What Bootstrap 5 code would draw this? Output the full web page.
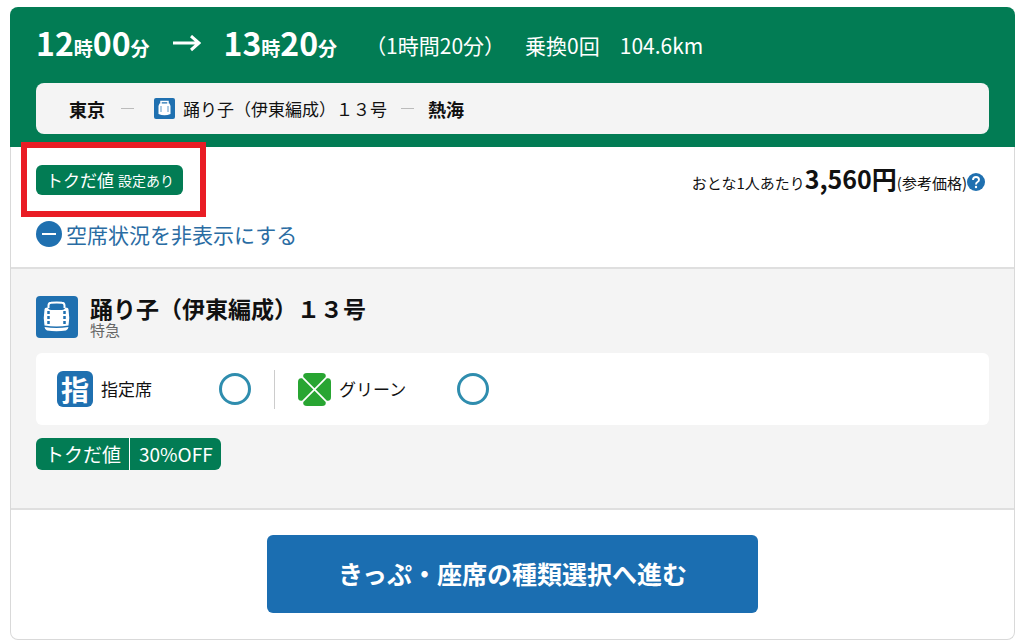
<!DOCTYPE html>
<html lang="ja">
<head>
<meta charset="utf-8">
<meta name="viewport" content="width=device-width, initial-scale=1">
<title>空席状況</title>
<link href="https://cdn.jsdelivr.net/npm/bootstrap@5.3.0/dist/css/bootstrap.min.css" rel="stylesheet">
<style>
  body { font-family: "Noto Sans CJK JP", sans-serif; color: #111; line-height: 24px; background: #fff; }
  svg { display: block; flex: none; }
  .page { padding: 7px 9px 4px 10px; }
  .trip-head { background: #027c54; color: #fff; border-radius: 8px 8px 0 0; padding: 14px 26px 13px; }
  .trip-body { border: 1px solid #d9d9d9; border-top: 0; border-radius: 0 0 8px 8px; }
  .times { height: 46px; margin-bottom: 16px; line-height: 48px; font-size: 21px; }
  .clock { font-size: 32px; font-weight: 700; line-height: 42px; }
  .clock small { font-size: 19px; }
  .arrow { margin: 0 23px; }
  .route { background: #f4f4f4; color: #111; border-radius: 8px; height: 51px; padding: 0 33px; font-size: 17px; }
  .route strong { font-size: 18px; }
  .dash { width: 13px; height: 1px; background: #bbb; margin: 0 16px; }
  .dash-end { margin: 0 14px; }
  .band { padding: 18px 25px 15px; }
  .band-grey { background: #f4f4f4; border-top: 2px solid #dfdfdf; border-bottom: 2px solid #dfdfdf; padding: 27px 25px 38px; }
  .deal { background: #027c54; color: #fff; border-radius: 6px; height: 30px; padding: 0 9px 0 10px; font-size: 17px; }
  .deal small { font-size: 14px; }
  .marker { position: absolute; inset: -23px -23px -22px -15px; border: 6px solid #e91d25; pointer-events: none; }
  .price { font-size: 15px; }
  .price strong { font-size: 25px; }
  .toggle-link { color: #2a6ca3; font-size: 21px; margin-top: 26px; }
  .train-name { font-size: 23px; line-height: 24px; font-weight: 700; margin: 0; }
  .train-kind { font-size: 15px; line-height: 20px; color: #666; }
  .seats { background: #fff; border-radius: 6px; height: 72px; padding: 0 21px; margin-top: 13px; font-size: 17px; }
  .seat-mark { width: 36px; height: 36px; border-radius: 6px; background: #1f70b0; color: #fff; font-size: 28px; font-weight: 700; line-height: 36px; text-align: center; }
  .seat-name { width: 118px; padding-left: 8px; }
  .avail { width: 32px; height: 32px; border: 3px solid #2f8dae; border-radius: 50%; }
  .seat-rule { width: 1px; height: 39px; background: #ccc; margin: 0 23px; }
  .discount { height: 32px; color: #fff; font-size: 19px; margin-top: 13px; border-radius: 6px; overflow: hidden; gap: 1px; background: #fff; }
  .discount span { background: #027c54; line-height: 32px; padding: 0 8px 0 9px; }
  .go-band { padding: 25px 25px 26px; }
  .go { background: #1b6eb1; color: #fff; border: 0; border-radius: 6px; height: 78px; width: 51.5%; font-size: 25px; font-weight: 700; }
  .go:hover { background: #155c96; color: #fff; }
</style>
</head>
<body>
<main class="page">
  <article>
    <header class="trip-head">
      <div class="times d-flex">
        <span class="clock">12<small>時</small>00<small>分</small></span>
        <svg class="arrow align-self-center" width="28" height="18" viewBox="0 0 28 18" fill="none" stroke="#fff" stroke-width="3" aria-label="から"><path d="M0 8H26M18 1L26 8L18 15"/></svg>
        <span class="clock">13<small>時</small>20<small>分</small></span>
        <span class="ms-4 ps-1">（1時間20分）</span>
        <span class="ms-3 ps-1">乗換0回</span>
        <span class="ms-3 ps-1">104.6km</span>
      </div>
      <div class="route d-flex align-items-center">
        <strong>東京</strong><span class="dash"></span>
        <svg class="ms-1 me-2" width="21" height="21" viewBox="0 0 21 21" aria-hidden="true"><rect width="21" height="21" rx="2" fill="#1f70b0"/><path d="M7 6V3.500h7V6" fill="none" stroke="#fff" stroke-width="1.500"/><path d="M5.500 5.500h10L16.500 8V16Q10.500 18.500 4.500 16V8Z" fill="#fff"/><path d="M7 8v6M14 8v6" stroke="#5b98c8"/></svg>
        <span>踊り子（伊東編成）１３号</span><span class="dash dash-end"></span><strong>熱海</strong>
      </div>
    </header>
    <div class="trip-body">
      <section class="band">
        <div class="d-flex justify-content-between align-items-center">
          <div class="deal position-relative d-flex align-items-center gap-1">トクだ値<small>設定あり</small><span class="marker"></span></div>
          <div class="price d-flex align-items-center me-1">
            <div>おとな1人あたり<strong>3,560円</strong>(参考価格)</div>
            <svg class="mt-1" width="18" height="18" viewBox="0 0 18 18" aria-label="ヘルプ"><circle cx="9" cy="9" r="9" fill="#1f70b0"/><path d="M6 7Q6 4 9 4T12 6.800Q12 8.200 10.500 9T9 11.500" fill="none" stroke="#fff" stroke-width="1.900"/><circle cx="9" cy="14" r="1.200" fill="#fff"/></svg>
          </div>
        </div>
        <a href="#seats" class="toggle-link d-inline-flex align-items-center text-decoration-none gap-1">
          <svg width="26" height="26" viewBox="0 0 26 26" aria-hidden="true"><circle cx="13" cy="13" r="13" fill="#1f70b0"/><path d="M6 13H20" stroke="#fff" stroke-width="2"/></svg>空席状況を非表示にする</a>
      </section>
      <section class="band-grey" id="seats">
        <div class="d-flex">
          <svg width="42" height="42" viewBox="0 0 42 42" aria-hidden="true">
            <rect width="42" height="42" rx="4" fill="#1f70b0"/>
            <path d="M12.500 12V9.500Q12.500 7 15 6.800Q21 6 26 6.800Q28.500 7 28.500 9.500V12" fill="none" stroke="#fff" stroke-width="2"/>
            <path d="M8.500 13.500Q8.500 11.500 11.500 11.500Q13 14 15 14H26Q28 14 29.500 11.500Q32.500 11.500 32.500 13.500Q34 22 32.500 29.500Q20.500 31.500 8.500 29.500Q7 22 8.500 13.500Z" fill="#fff"/>
            <path d="M8.500 31Q20.500 33 32.500 31Q32 34 30 34.500Q20.500 36 11 34.500Q9 34 8.500 31Z" fill="#fff"/>
            <path d="M12.500 15v13M28.500 15v13" stroke="#1f70b0" stroke-width="2.500" stroke-dasharray="3 2"/>
          </svg>
          <div class="ps-2 ms-1">
            <h2 class="train-name">踊り子（伊東編成）１３号</h2>
            <div class="train-kind">特急</div>
          </div>
        </div>
        <div class="seats d-flex align-items-center">
          <span class="seat-mark">指</span>
          <span class="seat-name">指定席</span>
          <span class="avail ms-2" role="img" aria-label="空席あり"></span>
          <span class="seat-rule"></span>
          <svg width="33" height="33" viewBox="0 0 33 33" fill="#28a532" aria-hidden="true"><path id="leaf" d="M16.500 15.300L5.300 4.100Q4.600 0 9 0H24Q28.400 0 27.700 4.100Z"/><use href="#leaf" transform="rotate(90 16.500 16.500)"/><use href="#leaf" transform="rotate(180 16.500 16.500)"/><use href="#leaf" transform="rotate(270 16.500 16.500)"/></svg>
          <span class="seat-name">グリーン</span>
          <span class="avail ms-2" role="img" aria-label="空席あり"></span>
        </div>
        <div class="discount d-inline-flex"><span>トクだ値</span><span>30%OFF</span></div>
      </section>
      <footer class="go-band text-center">
        <button type="button" class="btn go">きっぷ・座席の種類選択へ進む</button>
      </footer>
    </div>
  </article>
</main>
<script src="https://cdn.jsdelivr.net/npm/bootstrap@5.3.0/dist/js/bootstrap.bundle.min.js"></script>
</body>
</html>
